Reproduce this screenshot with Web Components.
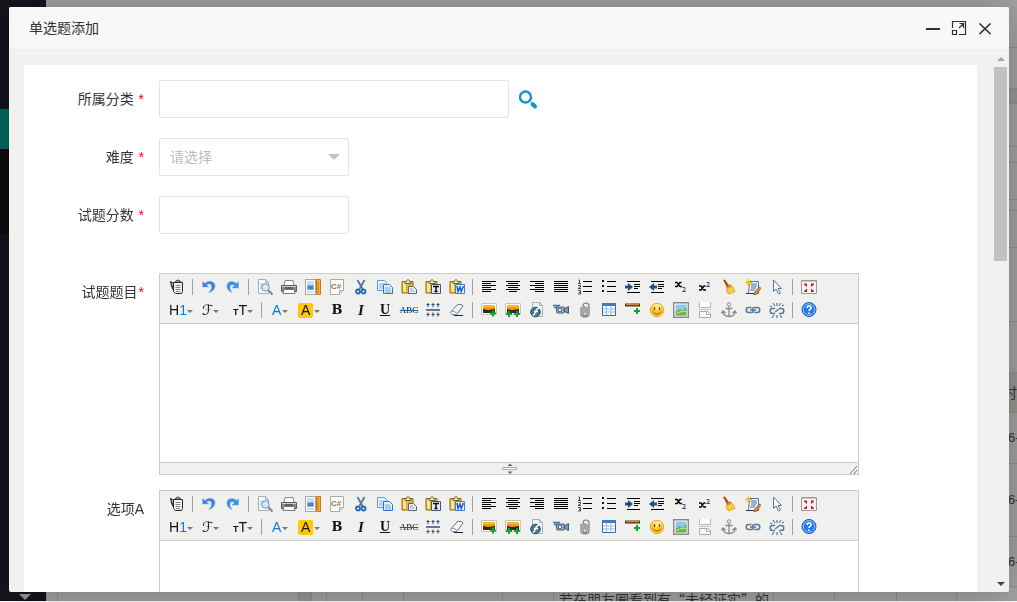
<!DOCTYPE html>
<html lang="zh-CN">
<head>
<meta charset="utf-8">
<title>单选题添加</title>
<style>
html, body { margin: 0; height: 100%; overflow: hidden; background: #fff; }
body { font: 14px/20px "Liberation Sans", "Noto Sans CJK SC", sans-serif; color: #333; }
</style>
</head>
<body>
<app-page></app-page>
<modal-dialog heading="单选题添加"><question-form></question-form></modal-dialog>

<script>
const define = (name, html, base = class extends HTMLElement {}) => {
  const tpl = document.createElement('template');
  tpl.innerHTML = html;
  customElements.define(name, class extends base {
    constructor() {
      super();
      this.attachShadow({ mode: 'open', delegatesFocus: name === 'rich-editor' }).append(tpl.content.cloneNode(true));
      if (this.ready) this.ready();
    }
  });
};

/* Toolbar glyphs, all on a 16 x 16 grid */
const bars = (xs) => xs.map(([x, w], i) => `<path d="M${x} ${2.5 + i * 2}h${w}" stroke="#000"/>`).join('');
const clip = '<path d="M1 2.500h11v11.500H1z" fill="#e9b23c" stroke="#9a6b12"/><path d="M2 3.500h3v9.500H2z" fill="#ffe489"/><path d="M4 4.500V2.500h1.500c0-2.500 3-2.500 3 0H10v2z" fill="#f6e9b0" stroke="#6d6337"/>';
const plus = (x, y) => `<path d="M${x} ${y - 3}v6M${x - 3} ${y}h6" stroke="#0fa536" stroke-width="2"/>`;
const photo = '<path d="M.5 1.500h15v11H.5z" fill="#fff" stroke="#c4c4c4"/><path d="M2 3h12v8H2z" fill="#f79a12"/><path d="M2 3h12v2H2z" fill="#ffb92c"/><path d="M2 7l5 1 7-1v4H2z" fill="#3a2810"/>';
const ICONS = {
  source: '<path d="M4.500 3.500h9v9l-1 2h-6l-2-2z" fill="#f2f2f2" stroke="#222"/><path d="M6.500 3c0-2.500 5-2.500 5 0z" fill="#e6e6e6" stroke="#333"/><path d="M6.500 6.500h5M6.500 8.500h5M6.500 10.500h5M7 12.500h4" stroke="#888"/><path d="M1 2.500l3 1.500M1.500 3l2.500 6M2 5.500l2 5" stroke="#333" stroke-width="1.200"/>',
  undo: '<path d="M1.500 2.500V8H8L5.500 6C8 4 11 5 10.500 8c0 2-1 4-3 5.500C12 13 14.500 9 14 6 13 2 8 .5 4 4.500z" fill="#3c7fe0" stroke="#7fb0f2" stroke-width=".5"/>',
  redo: '<path d="M13.500 2.500V9H7l2.500-2.500C7 5 5 6 5 8.500c0 2 1 3.500 2 5C3 12 1.500 9 2 6c1-4 6-4.500 9.500-1.500z" fill="#3c8fe0" stroke="#6aa8ee" stroke-width=".5"/>',
  preview: '<path d="M1.500.5h7l3 3v11h-10z" fill="#fafbff" stroke="#a5adba"/><path d="M8.500.5v3h3" fill="none" stroke="#a5adba"/><path d="M3 5h4M3 7h3M3 9h2" stroke="#b8c4d6"/><circle cx="8.500" cy="8.500" r="3.700" fill="#d4e8f8" fill-opacity=".9" stroke="#6b8fb5"/><path d="M11.500 11.500l4 4" stroke="#7d8793" stroke-width="2"/>',
  print: '<path d="M4 1.500h8l1 5H3z" fill="#fff" stroke="#888"/><path d="M.5 6.500h15v6H.5z" fill="#8d8d8d" stroke="#5a5a5a"/><path d="M1 7.500h14" stroke="#d0d0d0"/><path d="M3 10.500h10l1 4H2z" fill="#fff" stroke="#777"/><path d="M4 9h8" stroke="#333"/>',
  template: '<path d="M.5.5h10v15H.5z" fill="#fff" stroke="#555" stroke-dasharray="1 1"/><path d="M2 3h7M2 5h7" stroke="#9db8dd"/><path d="M2.500 6.500h6v4h-6z" fill="#4b85c4" stroke="#84aede"/><path d="M2 13h7" stroke="#9db8dd"/><path d="M11.500.5h4v15h-4z" fill="#f9b035" stroke="#c87a1a"/><path d="M12 3h2M12 5h2M12 7h2M12 9h2M12 11h2M12 13h2" stroke="#a8661a" stroke-width=".7"/>',
  code: '<path d="M1.500.5h13v11l-4 4h-9z" fill="#fdfdfd" stroke="#aaa"/><path d="M14.500 11.500h-4v4" fill="#ddd" stroke="#aaa"/><text x="2" y="10" font-size="8" font-weight="bold" fill="#a5683a">C#</text>',
  cut: '<path d="M4.500 1l5 9M11.500 1l-5 9" stroke="#56779d" stroke-width="1.800"/><circle cx="5" cy="12.500" r="2" fill="none" stroke="#2867ad" stroke-width="1.800"/><circle cx="10.500" cy="12.500" r="2" fill="none" stroke="#2867ad" stroke-width="1.800"/>',
  copy: '<path d="M.5 1.500h7l2 2v8h-9z" fill="#eef6ff" stroke="#5c9ae0"/><path d="M2 5h6M2 7h6M2 9h6" stroke="#7fb2ea"/><path d="M6.500 5.500h6l3 3v6h-9z" fill="#e2f0ff" stroke="#2f75c8"/><path d="M8 9h5M8 11h6M8 13h6" stroke="#69a5e6"/>',
  paste: clip + '<path d="M7.500 7.500h5l3 3v4h-8z" fill="#eef4fb" stroke="#536a86"/><path d="M9 10h3M9 12h5" stroke="#8ba7c7"/>',
  plain: clip + '<path d="M6.500 5.500h9v9h-9z" fill="#e4ebf6" stroke="#44556e"/><path d="M8 7.500h6M11 7v6M9.500 12.500h3" stroke="#000" stroke-width="1.400"/>',
  word: clip + '<path d="M6.500 5.500h9v9h-9z" fill="#e9f3ff" stroke="#3d80d5"/><path d="M8 7l1 5.500L11 8l1.200 4.500L14.500 7" fill="none" stroke="#1860c3" stroke-width="1.500"/>',
  left: bars([[1, 14], [1, 9], [1, 14], [1, 9], [1, 14], [1, 9]]),
  center: bars([[1, 14], [3, 10], [1, 14], [3, 10], [1, 14], [4, 8]]),
  right: bars([[1, 14], [6, 9], [1, 14], [6, 9], [1, 14], [6, 9]]),
  full: bars([[1, 14], [1, 14], [1, 14], [1, 14], [1, 14], [1, 14]]),
  ol: '<path d="M6 2.500h9M6 7.500h9M6 12.500h9" stroke="#000"/><path d="M1.500 1h1v3M1 4.500h3M1 6.500h2.500v1.500L1 9.500h3M1 11.500h2.500v3.500H1M2 13.500h1.500" fill="none" stroke="#333" stroke-width=".9"/>',
  ul: '<path d="M6 2.500h9M6 7.500h9M6 12.500h9" stroke="#000"/><path d="M1 1h2v2H1zM1 6h2v2H1zM1 11h2v2H1z" fill="#111"/>',
  indent: '<path d="M2 2.500h13M9 5.500h6M9 7.500h6M9 9.500h4M2 13.500h13" stroke="#000"/><path d="M0 6.500h3V4l5 4-5 4V9.500H0z" fill="#244f85"/>',
  outdent: '<path d="M2 2.500h13M9 5.500h6M9 7.500h6M9 9.500h4M2 13.500h13" stroke="#000"/><path d="M8 6.500H5V4L0 8l5 4V9.500h3z" fill="#244f85"/>',
  sub: '<path d="M2 3.500h2l3 4h2M8.500 3.500h-1.500l-3 4H2" fill="none" stroke="#000" stroke-width="1.400"/><path d="M9.500 8.500h2.500v2l-2.500 2h3.500" fill="none" stroke="#245b96"/>',
  sup: '<path d="M2 7h2l3 4h2M8.500 7h-1.500l-3 4H2" fill="none" stroke="#000" stroke-width="1.400"/><path d="M9.500 3.500h2.500v2l-2.500 2h3.500" fill="none" stroke="#245b96"/>',
  clean: '<path d="M2 1l2-.5 4 6-2 2z" fill="#a64c22"/><path d="M5 8l4-3 2 3-4 3z" fill="#d8792b"/><path d="M5.500 10l5-3.500c2 2 2 4 3.500 6L8 15c-2-1-3-3-2.500-5z" fill="#f7c331" stroke="#d79413" stroke-width=".7"/><path d="M8 10l2 4M10 9l2 4" stroke="#fff0a0" stroke-width=".7"/>',
  format: '<path d="M4.500 2.500h9v12h-10z" fill="#f5f9ff" stroke="#52729d"/><path d="M6 5h6M6 7h6M6 9h5M5 11h5" stroke="#446ea6"/><path d="M9 14l5-6 2 1-4 6-3 1z" fill="#e08b3a" stroke="#73451c" stroke-width=".6"/><path d="M3.500 0v7M0 3.500h7M1 1l5 5M6 1L1 6" stroke="#f7bb1b"/><path d="M1 14.500h8" stroke="#333"/>',
  select: '<path d="M4.500 1v11.500L7 10l2.500 5 2-1L9 9.500h3.500z" fill="#f7fbff" stroke="#55779e"/>',
  fullscreen: '<path d="M.5 1.500h15v13H.5z" fill="#f6f6f6" stroke="#999"/><path d="M1 2.500h14" stroke="#c7c7c7"/><path d="M3 4.500h3v3zM13 4.500h-3v3zM3 13h3v-3zM13 13h-3v-3z" fill="#c7141c"/><path d="M3 5l3 2.500M13 5l-3 2.500M3 12.500L6 10M13 12.500L10 10" stroke="#c7141c"/>',
  line: '<path d="M1 7.500h14" stroke="#53799b"/><path d="M1 8.500h14" stroke="#777"/><path d="M3 1v4M8 1v4M13 1v4M3 10.500v4M8 10.500v4M13 10.500v4M1.500 2.500h3M6.500 2.500h3M11.500 2.500h3M1.500 12.500h3M6.500 12.500h3M11.500 12.500h3" stroke="#254e7c"/>',
  eraser: '<path d="M1.500 10.500L8 3c1-1 5-1 6 1L8.500 11.500c-1 2-6 2-7-1z" fill="#f4f8ff" stroke="#5b7192"/><path d="M1.500 10c2-1.500 5 0 7 1.500" fill="none" stroke="#8797b2"/><path d="M5 13.500h9" stroke="#222"/>',
  image: photo + plus(12, 11.500),
  images: photo + plus(4, 12) + plus(12, 12),
  flash: '<path d="M3.500.5h7l3 3v11h-10z" fill="#f2f5f8" stroke="#a4adb8"/><path d="M10.500.5v3h3" fill="none" stroke="#a4adb8"/><circle cx="6.500" cy="10" r="4.800" fill="#4d7899" stroke="#244c6c"/><path d="M10 6c-4 0-3 7-6 7.500M5 9.500h4" fill="none" stroke="#fff" stroke-width="1.400"/>',
  media: '<path d="M3 5h8v6H4z" fill="#a6bbce" stroke="#3e5d79"/><path d="M0 3.500h7M1 5.500h4" stroke="#4d6f91" stroke-width="1.500"/><circle cx="7" cy="8" r="1.800" fill="#f6fbff" stroke="#3e5d79"/><path d="M11.500 6.500l4-2v7l-4-2z" fill="#7799b8" stroke="#3e5d79"/>',
  file: '<path d="M4 5v6.500c0 4.500 8 4.500 8 0V4C12 0 6 0 6 4v7.500c0 2.500 4 2.500 4 0V5M8 4v7" fill="none" stroke="#777" stroke-width="1.200"/>',
  table: '<path d="M1.500 1.500h13v12h-13z" fill="#fff" stroke="#3869aa"/><path d="M1 1h14v3H1z" fill="#3e79c6"/><path d="M2 7h12M2 10h12M5.500 4v9M10 4v9" stroke="#9bbbe2"/>',
  hr: '<path d="M0 3h15" stroke="#5b3309" stroke-width="3"/><path d="M1 2.700h13" stroke="#e0a04c"/>' + plus(12, 9),
  smile: '<circle cx="8" cy="8" r="6.700" fill="#ffc928" stroke="#e9a437"/><ellipse cx="8" cy="5" rx="4.500" ry="3" fill="#ffe98a"/><path d="M5.500 5v3M10.500 5v3" stroke="#854b08" stroke-width="1.400"/><path d="M4 9.500c2 3.500 6 3.500 8 0" fill="none" stroke="#8a4908"/>',
  map: '<path d="M.7.700h14.600v14.600H.7z" fill="#fff" stroke="#888" stroke-width="1.400"/><path d="M2.500 2.500h11v11h-11z" fill="#91c6ef"/><path d="M2.500 10l4-3 3 2 4-4v8.500h-11z" fill="#6eb344"/><path d="M2.500 11.500c4 0 4-3 11-2" fill="none" stroke="#d4ea91"/>',
  pagebreak: '<path d="M2.500 0v5.500h11V0" fill="#fff" stroke="#b4b4b4"/><path d="M2.500 15.500v-6h8l3 2v4z" fill="#fafafa" stroke="#aaa"/><path d="M9.500 9.500v3h4" fill="none" stroke="#aaa"/><path d="M2 7.500h12" stroke="#c8c8c8"/>',
  anchor: '<circle cx="8" cy="2.500" r="1.700" fill="none" stroke="#888"/><path d="M8 4.500v10M4.500 6.500h7M2 9c0 4 3 5.500 6 5.500S14 13 14 9M.5 11L2 9l2.500 2M11.500 11L14 9l1.500 2" fill="none" stroke="#888" stroke-width="1.300"/>',
  link: '<path d="M6.500 5.500h-3c-3 0-3 5 0 5h3c2 0 2.500-2 1.500-3M9.500 10.500h3c3 0 3-5 0-5h-3c-2 0-2.500 2-1.500 3M5 8h6" fill="none" stroke="#58779c" stroke-width="1.500"/>',
  unlink: '<path d="M6 6.500H3.500c-3 0-3 5 0 5H6M10 11.500h2.500c3 0 3-5 0-5H10M6 10l4-3" fill="none" stroke="#58779c" stroke-width="1.500"/><path d="M8 1v3M4 1l2 3M12 1l-2 3M8 13v3M5 13l-2 3M11 13l2 3M13 4l2-1M1 4l2 1" stroke="#345e8c"/>',
  about: '<circle cx="8" cy="7.500" r="7" fill="#2479e8" stroke="#1559b8"/><circle cx="8" cy="7.500" r="5.800" fill="none" stroke="#9cc8ff"/><path d="M6 6c0-3 4.500-2.500 4 0-.3 1.500-2 1.300-2 3M8 10.500V12" fill="none" stroke="#fff" stroke-width="1.600"/>'
};

define('tool-button', `
<style>
:host { display: block; width: 24px; height: 23px; }
button { all: unset; box-sizing: border-box; width: 100%; height: 23px; padding: 3px 4px; display: flex; align-items: flex-start; }
svg { display: block; width: 16px; height: 16px; }
text { font-family: "Liberation Sans", sans-serif; }
</style><button type="button"></button>`, class extends HTMLElement {
  connectedCallback() {
    const b = this.shadowRoot.querySelector('button');
    b.setAttribute('aria-label', this.getAttribute('name'));
    b.innerHTML = `<svg viewBox="0 0 16 16" fill="none" aria-hidden="true">${ICONS[this.getAttribute('name')]}</svg>`;
  }
});

/* Button whose face is lettering, with an optional drop-down mark */
define('letter-button', `
<style>
:host { display: block; width: 24px; height: 23px; }
:host([menu]) { width: 31px; }
:host([menu=text]) { width: 28px; }
:host([menu=fill]) { width: 31px; }
button { all: unset; box-sizing: border-box; width: 100%; height: 23px; padding: 3px 4px 4px; display: flex; align-items: center; justify-content: center; font: 14px/16px "Liberation Sans", sans-serif; color: #111; white-space: nowrap; }
i.arrow { display: none; border: solid transparent; border-width: 3px 3px 0; border-top-color: #777; margin-top: 3px; }
:host([menu]) button { justify-content: flex-start; padding-right: 0; }
:host([menu=size]) button, :host([menu=text]) button { padding-left: 6px; }
:host([menu]) i.arrow { display: block; }
:host([menu=text]) i.arrow, :host([menu=fill]) i.arrow { margin-left: 1px; }
</style><button type="button"><slot></slot><i class="arrow"></i></button>`);

define('tool-divider', `
<style>:host { display: block; box-sizing: border-box; width: 8px; height: 23px; padding: 3px; } i { display: block; width: 1px; height: 16px; background: #a0a0a0; }</style><i></i>`);

const tools = (s) => s.split(' ').map(n => n === '|' ? '<tool-divider></tool-divider>' : `<tool-button name="${n}"></tool-button>`).join('');

define('rich-editor', `
<style>
:host { display: block; box-sizing: border-box; width: 100%; max-width: 700px; border: 1px solid #ccc; background: #fff; }
.bar { background: #f0f0ee; border-bottom: 1px solid #ccc; padding: 2px 5px 1px; }
.row { display: flex; }
textarea { display: block; box-sizing: border-box; width: 100%; height: 138px; border: 0; padding: 5px; margin: 0; resize: none; outline: none; font: inherit; }
.status { display: grid; grid-template-columns: 1fr 16px 1fr; height: 11px; border-top: 1px solid #ccc; background: #f0f0ee; }
.status svg { display: block; }
.corner { justify-self: end; }
.h { color: #0a78e8; }
.f { font: 14px/16px "DejaVu Sans", sans-serif; }
.small { font-size: 9px; font-weight: bold; padding-top: 3px; }
.hi { background: #ffc800; border-radius: 2px; padding: 0 3px; height: 15px; line-height: 15px; }
.s { font: bold 13px/16px "DejaVu Serif", serif; }
.it { font: italic bold 15px/16px "Liberation Serif", serif; }
.un { font: bold 14px/16px "Liberation Serif", serif; text-decoration: underline; }
.st { font: 9px/16px "Liberation Serif", serif; text-decoration: line-through #245b96; }
</style>
<div class="bar" role="toolbar">
  <div class="row">${tools('source | undo redo | preview print template code cut copy paste plain word | left center right full ol ul indent outdent sub sup clean format select | fullscreen')}</div>
  <div class="row">
    <letter-button menu><span>H<span class="h">1</span></span></letter-button>
    <letter-button menu="size"><span class="f">ℱ</span></letter-button>
    <letter-button menu="size"><span class="small">T</span><span>T</span></letter-button>
    <tool-divider></tool-divider>
    <letter-button menu="text"><span class="h">A</span></letter-button>
    <letter-button menu="fill"><span class="hi">A</span></letter-button>
    <letter-button><span class="s">B</span></letter-button>
    <letter-button><span class="it">I</span></letter-button>
    <letter-button><span class="un">U</span></letter-button>
    <letter-button><span class="st">ABC</span></letter-button>
    ${tools('line eraser | image images flash media file table hr smile map pagebreak anchor link unlink | about')}
  </div>
</div>
<textarea></textarea>
<div class="status"><span></span>
  <svg width="16" height="11" viewBox="0 0 16 11"><path d="M6.500 3L9 .5 11.500 3zM6.500 8.500L9 11l2.500-2.500z" fill="#666"/><path d="M1.500 4.500h14v2h-14z" fill="#fff" stroke="#aaa"/></svg>
  <svg class="corner" width="10" height="11" viewBox="0 0 10 11"><path d="M2 11L9 3M6 11l3-4" stroke="#777"/></svg>
</div>`, class extends HTMLElement {
  static formAssociated = true;
  ready() { this.internals = this.attachInternals(); }
  connectedCallback() { this.shadowRoot.querySelector('textarea').setAttribute('aria-label', this.getAttribute('name')); }
});

define('form-row', `
<style>
:host { display: grid; grid-template-columns: 120px 1fr; }
.label { padding: 9px 0; text-align: right; line-height: 20px; }
.field { padding-left: 15px; display: flex; align-items: center; gap: 8px; min-width: 0; }
</style><div class="label"><slot name="label"></slot></div><div class="field"><slot></slot></div>`);

define('question-form', `
<style>
:host { display: block; background: #fff; border-radius: 2px; padding: 15px 15px 0 0; }
form { display: flex; flex-direction: column; gap: 20px; }
.editors { display: flex; flex-direction: column; gap: 15px; padding-top: 19px; }
label b { color: #f00; font-weight: normal; margin-left: 1px; }
input, select { box-sizing: border-box; width: 190px; height: 38px; border: 1px solid #e3e3e3; border-radius: 2px; background: #fff; padding: 0 10px; font: inherit; outline: none; }
input.wide { width: 350px; }
select { appearance: none; color: #bbb; }
.pick { display: grid; align-items: center; }
.pick > * { grid-area: 1 / 1; }
.pick i { justify-self: end; margin-right: 9px; border: solid transparent; border-width: 6px 6px 0; border-top-color: #c2c2c2; pointer-events: none; }
button { all: unset; display: block; }
svg { display: block; }
</style>
<form>
  <form-row><label slot="label" for="cat">所属分类 <b>*</b></label><input id="cat" class="wide"><button type="button" aria-label="搜索"><svg width="22" height="22" viewBox="0 0 22 22" fill="none" stroke="#1890d5"><circle cx="8.500" cy="9" r="5.500" stroke-width="2.400"/><path d="M15.500 16l2.500 2.500" stroke-width="4" stroke-linecap="round"/></svg></button></form-row>
  <form-row><label slot="label" for="level">难度 <b>*</b></label><span class="pick"><select id="level"><option>请选择</option></select><i></i></span></form-row>
  <form-row><label slot="label" for="score">试题分数 <b>*</b></label><input id="score"></form-row>
  <div class="editors">
    <form-row><label slot="label" for="stem">试题题目<b>*</b></label><rich-editor id="stem" name="试题题目"></rich-editor></form-row>
    <form-row><label slot="label" for="a">选项A</label><rich-editor id="a" name="选项A"></rich-editor></form-row>
  </div>
</form>`);

define('scroll-rail', `
<style>
:host { display: flex; flex-direction: column; align-items: center; width: 17px; background: #f1f1f1; }
.cap { flex: none; width: 17px; height: 17px; display: grid; place-items: center; }
.cap i { border: solid transparent; border-width: 0 4px 4px; border-bottom-color: #a3a3a3; }
.cap.down i { border-width: 4px 4px 0; border-top-color: #444; }
.track { flex: 1; width: 13px; }
.thumb { height: 38.200%; background: #c1c1c1; }
</style><div class="cap"><i></i></div><div class="track"><div class="thumb"></div></div><div class="cap down"><i></i></div>`);

define('modal-dialog', `
<style>
:host { position: fixed; inset: 7px 8px 10px 9px; display: flex; flex-direction: column; background: #f2f1ef; border-radius: 2px; box-shadow: 1px 1px 50px rgba(0,0,0,.3); overflow: hidden; }
header { display: flex; align-items: center; height: 42px; flex: none; padding: 0 16px 0 20px; background: #f8f8f8; border-bottom: 1px solid #eee; }
h1 { margin: 0; flex: 1; font: inherit; }
nav { display: flex; gap: 10px; }
button { all: unset; display: block; }
svg { display: block; width: 16px; height: 16px; }
.body { flex: 1; min-height: 0; display: flex; }
.scroll { flex: 1; min-width: 0; overflow: hidden; padding: 15px 15px 0; }
</style>
<header><h1></h1><nav>
  <button type="button" aria-label="最小化"><svg viewBox="0 0 16 16"><path d="M1 9h14" stroke="#2e2d3c" stroke-width="2"/></svg></button>
  <button type="button" aria-label="最大化"><svg viewBox="0 0 16 16" fill="none" stroke="#2e2d3c"><path d="M1.500 8V1.500h13v13H8M8 8l5-5M8.500 3.500h4V8M1.500 10.500h4v4h-4z" stroke-width="1.200"/></svg></button>
  <button type="button" aria-label="关闭"><svg viewBox="0 0 16 16"><path d="M2.500 3.500l11 10.500M13.500 3.500L2.500 14" stroke="#2e2d3c" stroke-width="1.700"/></svg></button>
</nav></header>
<div class="body"><div class="scroll"><slot></slot></div><scroll-rail></scroll-rail></div>`, class extends HTMLElement {
  connectedCallback() { this.shadowRoot.querySelector('h1').textContent = this.getAttribute('heading'); }
});

/* Dimmed page behind the dialog */
define('app-page', `
<style>
:host { display: grid; grid-template: 1fr 9px / 46px 1fr 9px; height: calc(100% - 1px); background: #a5a5a5; color: #333; overflow: hidden; }
aside { grid-row: 1 / 3; background: #14151d; display: flex; flex-direction: column; padding-top: 109px; align-items: center; }
.on { width: 100%; height: 40px; background: #006c60; }
.rest { flex: 1; width: 100%; background: linear-gradient(#0c0d10 84px, #14151d 84px); }
.tri { border: solid transparent; border-width: 6px 6px 0; border-top-color: #999; margin: 0 0 1px 4px; }
.side { grid-area: 1 / 3; overflow: hidden; font-size: 13px; }
.side div { box-sizing: border-box; border-bottom: 1px solid #919191; overflow: hidden; display: flex; align-items: center; }
.side .warm { justify-content: flex-end; font-size: 14px; }
.side .warm, .foot .warm { background: #9b9996; }
.foot { grid-area: 2 / 2 / 3 / 4; display: grid; grid-template-columns: 11px 241px 13px 15px 36px 41px 99px 51px 220px 61px 62px 60px 1fr; overflow: hidden; font-family: "Noto Sans CJK SC", sans-serif; }
.foot div { border-left: 1px solid #8f9299; height: 9px; overflow: hidden; white-space: nowrap; padding-left: 5px; line-height: 14px; }
</style>
<aside><div class="on"></div><div class="rest"></div><i class="tri"></i></aside>
<div class="side">
  <div style="height:48px"></div><div style="height:41px"></div><div class="warm" style="height:15px"></div><div style="height:43px"></div><div style="height:16px"></div><div style="height:37px"></div><div style="height:11px"></div><div style="height:37px"></div><div style="height:74px"></div><div style="height:51px"></div>
  <div class="warm" style="height:40px"><span>时</span></div><div style="height:51px"><span>6-</span></div><div style="height:73px"><span>6-</span></div><div style="height:50px"><span>6-</span></div>
</div>
<div class="foot"><div></div><div></div><div class="warm"></div><div></div><div></div><div></div><div></div><div></div><div>若在朋友圈看到有“未经证实”的</div><div></div><div></div><div></div><div></div></div>`);
</script>
</body>
</html>
